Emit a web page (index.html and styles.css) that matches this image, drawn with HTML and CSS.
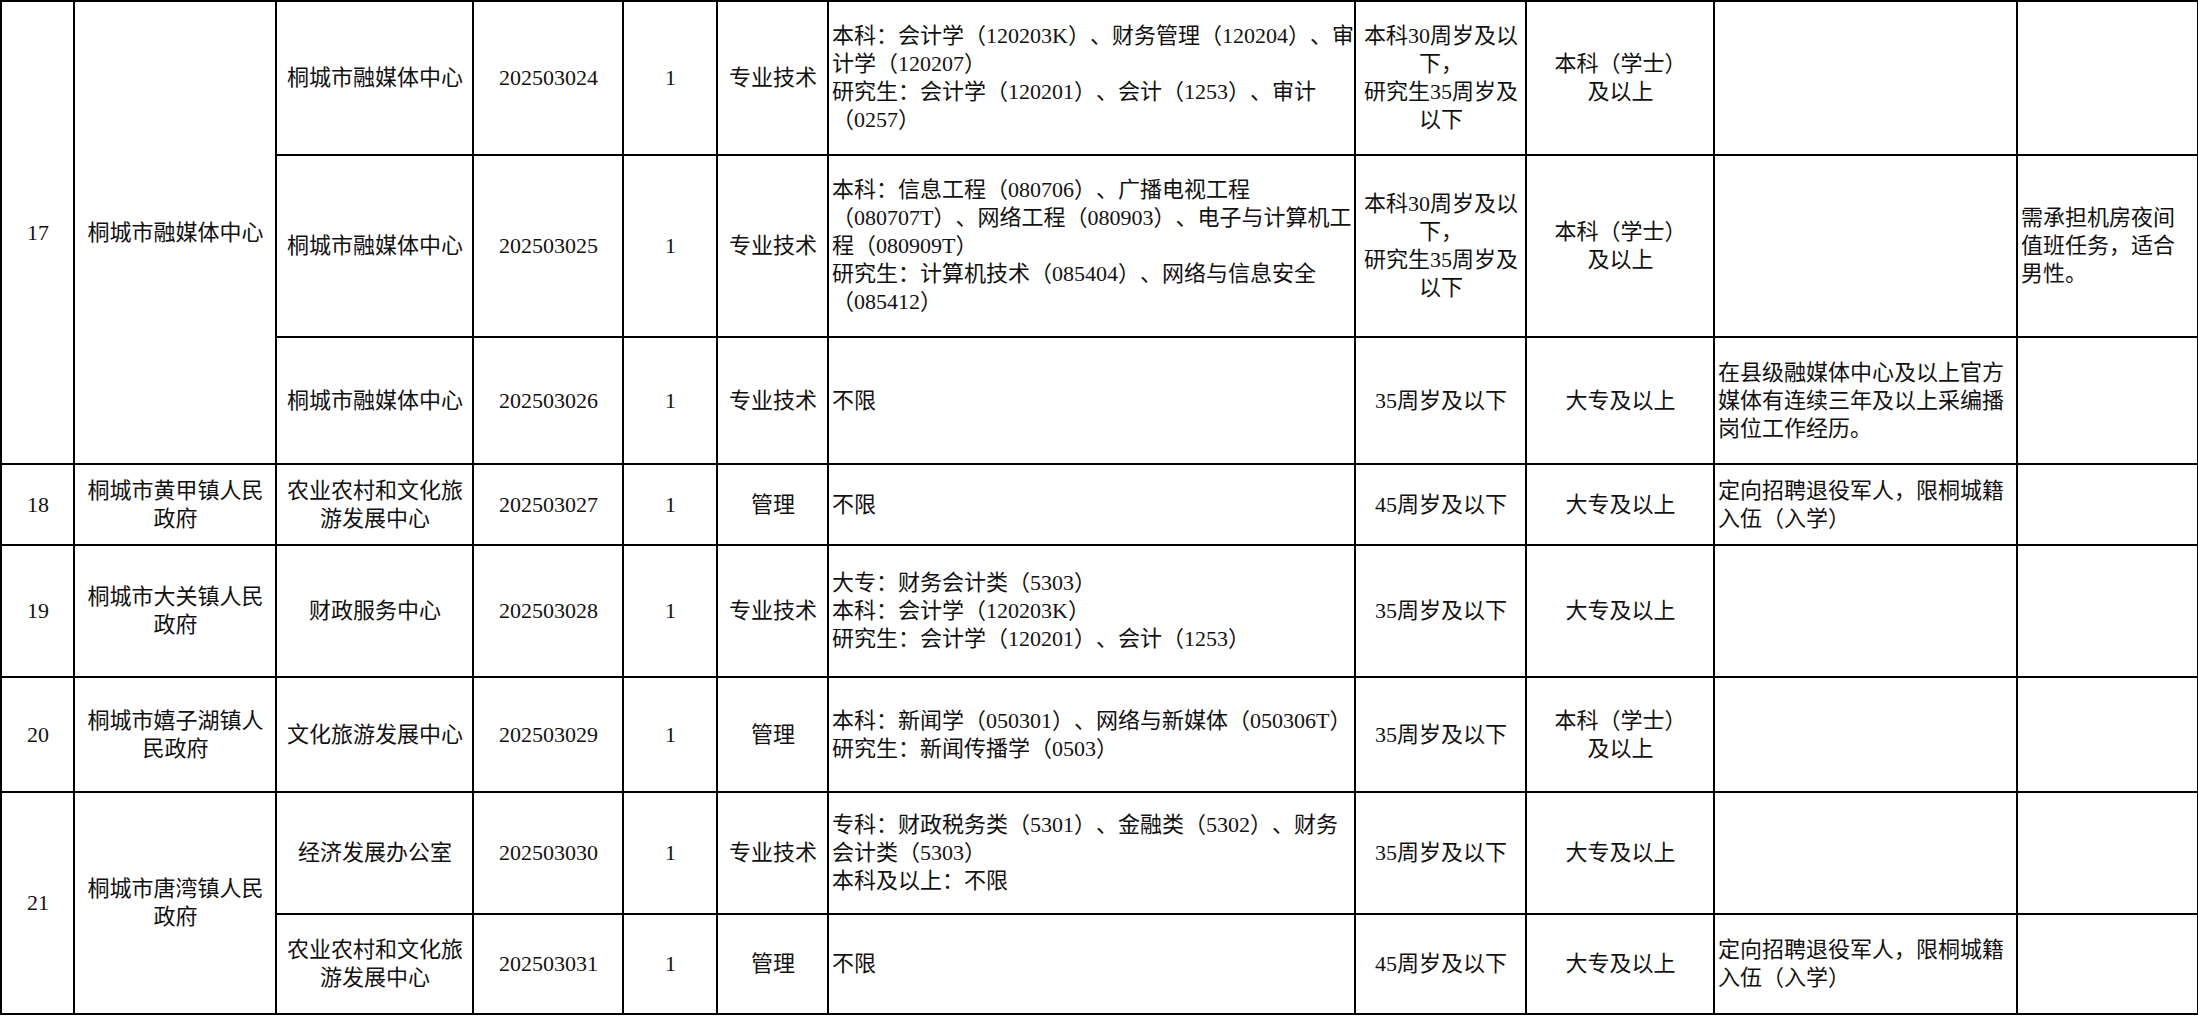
FILE: index.html
```html
<!DOCTYPE html>
<html lang="zh-CN">
<head>
<meta charset="utf-8">
<title>岗位表</title>
<link rel="stylesheet" href="styles.css">
</head>
<body>
<table class="grid">
  <colgroup>
    <col class="c1"><col class="c2"><col class="c3"><col class="c4"><col class="c5"><col class="c6"><col class="c7"><col class="c8"><col class="c9"><col class="c10"><col class="c11">
  </colgroup>
  <tbody>
    <tr class="h1">
      <td rowspan="3">17</td>
      <td rowspan="3">桐城市融媒体中心</td>
      <td>桐城市融媒体中心</td>
      <td>202503024</td>
      <td>1</td>
      <td>专业技术</td>
      <td class="l">本科：会计学（120203K）、财务管理（120204）、审<br>计学（120207）<br>研究生：会计学（120201）、会计（1253）、审计<br>（0257）</td>
      <td>本科30周岁及以<br>下，<br>研究生35周岁及<br>以下</td>
      <td>本科（学士）<br>及以上</td>
      <td class="l"></td>
      <td class="l"></td>
    </tr>
    <tr class="h2">
      <td>桐城市融媒体中心</td>
      <td>202503025</td>
      <td>1</td>
      <td>专业技术</td>
      <td class="l">本科：信息工程（080706）、广播电视工程<br>（080707T）、网络工程（080903）、电子与计算机工<br>程（080909T）<br>研究生：计算机技术（085404）、网络与信息安全<br>（085412）</td>
      <td>本科30周岁及以<br>下，<br>研究生35周岁及<br>以下</td>
      <td>本科（学士）<br>及以上</td>
      <td class="l"></td>
      <td class="l">需承担机房夜间<br>值班任务，适合<br>男性。</td>
    </tr>
    <tr class="h3">
      <td>桐城市融媒体中心</td>
      <td>202503026</td>
      <td>1</td>
      <td>专业技术</td>
      <td class="l">不限</td>
      <td>35周岁及以下</td>
      <td>大专及以上</td>
      <td class="l">在县级融媒体中心及以上官方<br>媒体有连续三年及以上采编播<br>岗位工作经历。</td>
      <td class="l"></td>
    </tr>
    <tr class="h4">
      <td>18</td>
      <td>桐城市黄甲镇人民<br>政府</td>
      <td>农业农村和文化旅<br>游发展中心</td>
      <td>202503027</td>
      <td>1</td>
      <td>管理</td>
      <td class="l">不限</td>
      <td>45周岁及以下</td>
      <td>大专及以上</td>
      <td class="l">定向招聘退役军人，限桐城籍<br>入伍（入学）</td>
      <td class="l"></td>
    </tr>
    <tr class="h5">
      <td>19</td>
      <td>桐城市大关镇人民<br>政府</td>
      <td>财政服务中心</td>
      <td>202503028</td>
      <td>1</td>
      <td>专业技术</td>
      <td class="l">大专：财务会计类（5303）<br>本科：会计学（120203K）<br>研究生：会计学（120201）、会计（1253）</td>
      <td>35周岁及以下</td>
      <td>大专及以上</td>
      <td class="l"></td>
      <td class="l"></td>
    </tr>
    <tr class="h6">
      <td>20</td>
      <td>桐城市嬉子湖镇人<br>民政府</td>
      <td>文化旅游发展中心</td>
      <td>202503029</td>
      <td>1</td>
      <td>管理</td>
      <td class="l">本科：新闻学（050301）、网络与新媒体（050306T）<br>研究生：新闻传播学（0503）</td>
      <td>35周岁及以下</td>
      <td>本科（学士）<br>及以上</td>
      <td class="l"></td>
      <td class="l"></td>
    </tr>
    <tr class="h7">
      <td rowspan="2">21</td>
      <td rowspan="2">桐城市唐湾镇人民<br>政府</td>
      <td>经济发展办公室</td>
      <td>202503030</td>
      <td>1</td>
      <td>专业技术</td>
      <td class="l">专科：财政税务类（5301）、金融类（5302）、财务<br>会计类（5303）<br>本科及以上：不限</td>
      <td>35周岁及以下</td>
      <td>大专及以上</td>
      <td class="l"></td>
      <td class="l"></td>
    </tr>
    <tr class="h8">
      <td>农业农村和文化旅<br>游发展中心</td>
      <td>202503031</td>
      <td>1</td>
      <td>管理</td>
      <td class="l">不限</td>
      <td>45周岁及以下</td>
      <td>大专及以上</td>
      <td class="l">定向招聘退役军人，限桐城籍<br>入伍（入学）</td>
      <td class="l"></td>
    </tr>
  </tbody>
</table>
</body>
</html>
```
FILE: styles.css
```css
html, body {
  margin: 0;
  padding: 0;
  background: #ffffff;
}

body {
  font-family: "Liberation Serif", "Noto Sans CJK SC", serif;
  font-size: 22px;
  line-height: 28px;
  color: #111111;
  text-spacing-trim: space-all;
  font-feature-settings: "halt" 0, "chws" 0;
}

.grid {
  border-collapse: collapse;
  table-layout: fixed;
  width: 2197px;
}

.grid td {
  border: 2px solid #000000;
  padding: 0 2px 0 3px;
  text-align: center;
  vertical-align: middle;
  white-space: nowrap;
}

.grid td.l {
  text-align: left;
}

.c1 { width: 73px; }
.c2 { width: 202px; }
.c3 { width: 197px; }
.c4 { width: 150px; }
.c5 { width: 94px; }
.c6 { width: 111px; }
.c7 { width: 527px; }
.c8 { width: 171px; }
.c9 { width: 188px; }
.c10 { width: 303px; }
.c11 { width: 181px; }

.h1 { height: 154px; }
.h2 { height: 182px; }
.h3 { height: 127px; }
.h4 { height: 81px; }
.h5 { height: 132px; }
.h6 { height: 115px; }
.h7 { height: 122px; }
.h8 { height: 100px; }
```
